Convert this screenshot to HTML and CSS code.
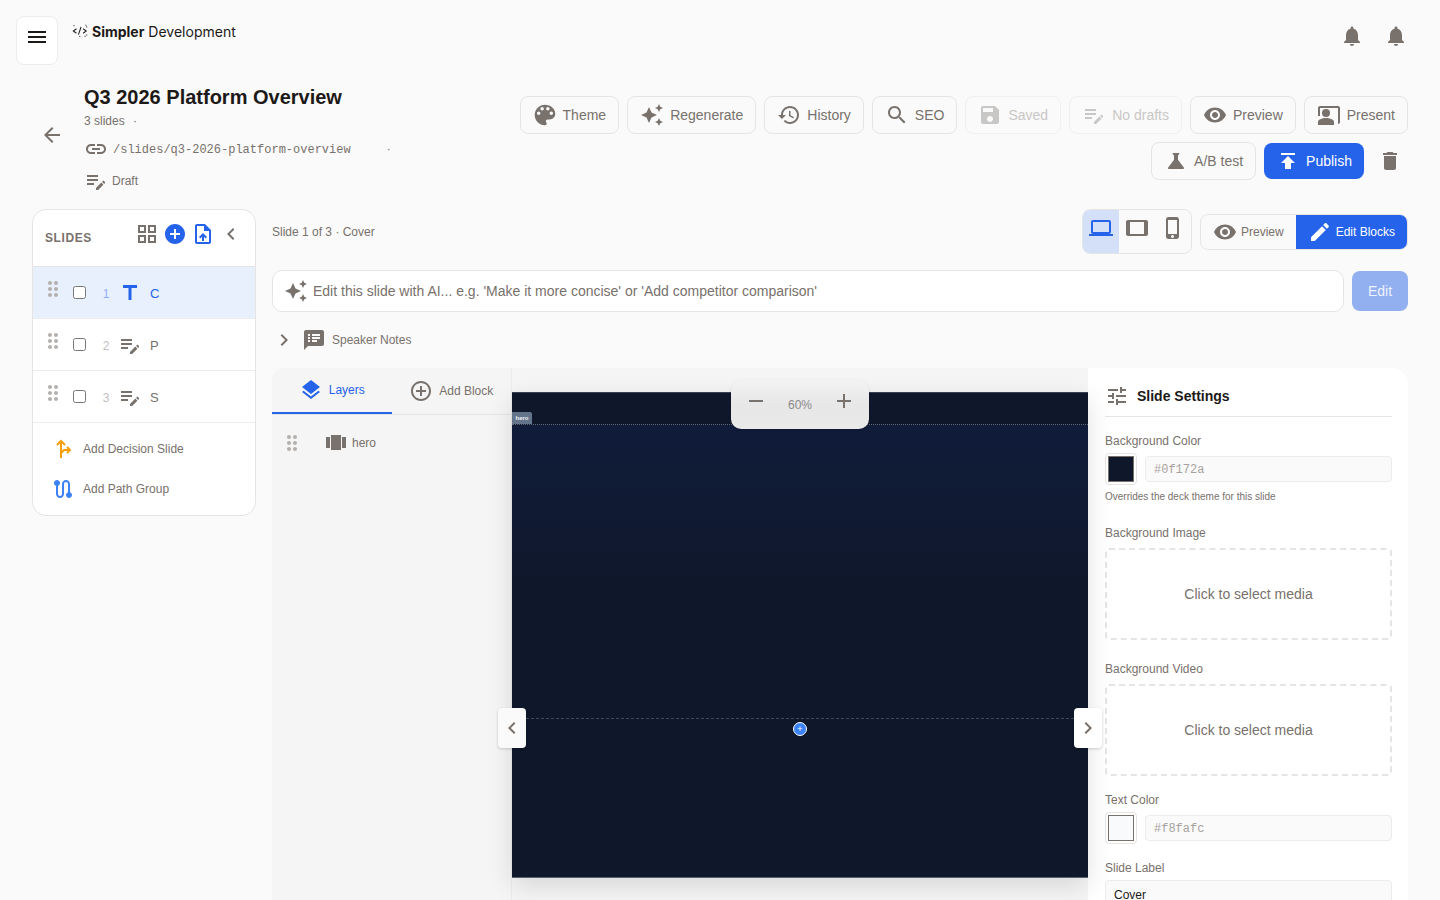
FILE: index.html
```html
<!DOCTYPE html>
<html lang="en">
<head>
<meta charset="utf-8">
<title>Q3 2026 Platform Overview</title>
<link rel="stylesheet" href="styles.css">
</head>
<body>
<svg class="sprite" aria-hidden="true">
  <symbol id="i-menu" viewBox="0 0 24 24"><path d="M3 18h18v-2H3v2zm0-5h18v-2H3v2zm0-7v2h18V6H3z"/></symbol>
  <symbol id="i-back" viewBox="0 0 24 24"><path d="M20 11H7.83l5.59-5.59L12 4l-8 8 8 8 1.41-1.41L7.83 13H20v-2z"/></symbol>
  <symbol id="i-bell" viewBox="0 0 24 24"><path d="M12 22c1.1 0 2-.9 2-2h-4c0 1.1.89 2 2 2zm6-6v-5c0-3.07-1.64-5.64-4.5-6.32V4c0-.83-.67-1.5-1.5-1.5s-1.5.67-1.5 1.5v.68C7.63 5.36 6 7.92 6 11v5l-2 2v1h16v-1l-2-2z"/></symbol>
  <symbol id="i-palette" viewBox="1.5 1.5 21 21"><path d="M12 3c-4.97 0-9 4.03-9 9s4.03 9 9 9c.83 0 1.5-.67 1.5-1.5 0-.39-.15-.74-.39-1.01-.23-.26-.38-.61-.38-.99 0-.83.67-1.5 1.5-1.5H16c2.76 0 5-2.24 5-5 0-4.42-4.03-8-9-8zm-5.5 9c-.83 0-1.5-.67-1.5-1.5S5.67 9 6.5 9 8 9.67 8 10.5 7.33 12 6.5 12zm3-4C8.67 8 8 7.33 8 6.5S8.67 5 9.5 5s1.5.67 1.5 1.5S10.33 8 9.5 8zm5 0c-.83 0-1.5-.67-1.5-1.5S13.67 5 14.5 5s1.5.67 1.5 1.5S15.33 8 14.5 8zm3 4c-.83 0-1.5-.67-1.5-1.5S16.67 9 17.5 9s1.5.67 1.5 1.5-.67 1.5-1.5 1.5z"/></symbol>
  <symbol id="i-spark" viewBox="0 0 24 24"><path d="M19 9l1.25-2.75L23 5l-2.75-1.25L19 1l-1.25 2.75L15 5l2.75 1.25L19 9zm-7.5.5L9 4 6.5 9.5 1 12l5.5 2.5L9 20l2.5-5.5L17 12l-5.5-2.5zM19 15l-1.25 2.75L15 19l2.75 1.25L19 23l1.25-2.75L23 19l-2.75-1.25L19 15z"/></symbol>
  <symbol id="i-history" viewBox="0 0 24 24"><path d="M13 3c-4.97 0-9 4.03-9 9H1l3.89 3.89.07.14L9 12H6c0-3.87 3.13-7 7-7s7 3.13 7 7-3.13 7-7 7c-1.93 0-3.68-.79-4.94-2.06l-1.42 1.42C8.27 19.99 10.51 21 13 21c4.97 0 9-4.03 9-9s-4.03-9-9-9zm-1 5v5l4.28 2.54.72-1.21-3.5-2.08V8H12z"/></symbol>
  <symbol id="i-search" viewBox="0 0 24 24"><path d="M15.5 14h-.79l-.28-.27C15.41 12.59 16 11.11 16 9.5 16 5.91 13.09 3 9.5 3S3 5.91 3 9.5 5.91 16 9.5 16c1.61 0 3.09-.59 4.23-1.57l.27.28v.79l5 4.99L20.49 19l-4.99-5zm-6 0C7.01 14 5 11.99 5 9.5S7.01 5 9.5 5 14 7.01 14 9.5 11.99 14 9.5 14z"/></symbol>
  <symbol id="i-save" viewBox="0 0 24 24"><path d="M17 3H5c-1.11 0-2 .9-2 2v14c0 1.1.89 2 2 2h14c1.1 0 2-.9 2-2V7l-4-4zm-5 16c-1.66 0-3-1.34-3-3s1.34-3 3-3 3 1.34 3 3-1.34 3-3 3zm3-10H5V5h10v4z"/></symbol>
  <symbol id="i-note" viewBox="0 0 24 24"><path d="M3 10h11v2H3v-2zm0-2h11V6H3v2zm0 8h7v-2H3v2zm15.01-3.13l.71-.71c.39-.39 1.02-.39 1.41 0l.71.71c.39.39.39 1.02 0 1.41l-.71.71-2.12-2.12zm-.71.71l-5.3 5.3V21h2.12l5.3-5.3-2.12-2.12z"/></symbol>
  <symbol id="i-eye" viewBox="0 0 24 24"><path d="M12 4.5C7 4.5 2.73 7.61 1 12c1.73 4.39 6 7.5 11 7.5s9.27-3.11 11-7.5c-1.73-4.39-6-7.5-11-7.5zM12 17c-2.76 0-5-2.24-5-5s2.24-5 5-5 5 2.24 5 5-2.24 5-5 5zm0-8c-1.66 0-3 1.34-3 3s1.34 3 3 3 3-1.34 3-3-1.34-3-3-3z"/></symbol>
  <symbol id="i-present" viewBox="0 0 24 24"><path d="M21 3H3C1.9 3 1 3.9 1 5v8h2V5h18v16c1.1 0 2-.9 2-2V5c0-1.1-.9-2-2-2z"/><circle cx="9" cy="10" r="4"/><path d="M15.39 16.56C13.71 15.7 11.53 15 9 15c-2.53 0-4.71.7-6.39 1.56C1.61 17.07 1 18.1 1 19.22V22h16v-2.78c0-1.12-.61-2.15-1.61-2.66z"/></symbol>
  <symbol id="i-flask" viewBox="0 0 24 24"><path d="M19.8 18.4 14 10.67V6.5l1.35-1.69c.26-.33.03-.81-.39-.81H9.04c-.42 0-.65.48-.39.81L10 6.5v4.17L4.2 18.4c-.49.66-.02 1.6.8 1.6h14c.82 0 1.29-.94.8-1.6z"/></symbol>
  <symbol id="i-publish" viewBox="0 0 24 24"><path d="M5 4v2h14V4H5zm0 10h4v6h6v-6h4l-7-7-7 7z"/></symbol>
  <symbol id="i-delete" viewBox="0 0 24 24"><path d="M6 19c0 1.1.9 2 2 2h8c1.1 0 2-.9 2-2V7H6v12zM19 4h-3.5l-1-1h-5l-1 1H5v2h14V4z"/></symbol>
  <symbol id="i-grid" viewBox="0 0 24 24"><path d="M3 3v8h8V3H3zm6 6H5V5h4v4zm-6 4v8h8v-8H3zm6 6H5v-4h4v4zm4-16v8h8V3h-8zm6 6h-4V5h4v4zm-6 4v8h8v-8h-8zm6 6h-4v-4h4v4z"/></symbol>
  <symbol id="i-addc" viewBox="0 0 24 24"><path d="M12 2C6.48 2 2 6.48 2 12s4.48 10 10 10 10-4.48 10-10S17.52 2 12 2zm5 11h-4v4h-2v-4H7v-2h4V7h2v4h4v2z"/></symbol>
  <symbol id="i-upload" viewBox="0 0 24 24"><path d="M14 2H6c-1.1 0-1.99.9-1.99 2L4 20c0 1.1.89 2 1.99 2H18c1.1 0 2-.9 2-2V8l-6-6zm4 18H6V4h7v5h5v11zM8 15.01l1.41 1.41L11 14.84V19h2v-4.16l1.59 1.59L16 15.01 12.01 11 8 15.01z"/></symbol>
  <symbol id="i-left" viewBox="0 0 24 24"><path d="M15.41 7.41L14 6l-6 6 6 6 1.41-1.41L10.83 12z"/></symbol>
  <symbol id="i-right" viewBox="0 0 24 24"><path d="M10 6L8.59 7.41 13.17 12l-4.58 4.59L10 18l6-6z"/></symbol>
  <symbol id="i-title" viewBox="0 0 24 24"><path d="M5 4v3h5.5v12h3V7H19V4z"/></symbol>
  <symbol id="i-drag" viewBox="0 0 24 24"><path d="M11 18c0 1.1-.9 2-2 2s-2-.9-2-2 .9-2 2-2 2 .9 2 2zm-2-8c-1.1 0-2 .9-2 2s.9 2 2 2 2-.9 2-2-.9-2-2-2zm0-6c-1.1 0-2 .9-2 2s.9 2 2 2 2-.9 2-2-.9-2-2-2zm6 4c1.1 0 2-.9 2-2s-.9-2-2-2-2 .9-2 2 .9 2 2 2zm0 2c-1.1 0-2 .9-2 2s.9 2 2 2 2-.9 2-2-.9-2-2-2zm0 6c-1.1 0-2 .9-2 2s.9 2 2 2 2-.9 2-2-.9-2-2-2z"/></symbol>
  <symbol id="i-fork" viewBox="0 0 24 24"><path d="M10 21V4M6 8l4-4 4 4M10 16l3-3h6M16 10l3 3-3 3" fill="none" stroke="currentColor" stroke-width="2"/></symbol>
  <symbol id="i-route" viewBox="0 0 24 24"><path d="M19 15.18V7c0-2.21-1.79-4-4-4s-4 1.79-4 4v10c0 1.1-.9 2-2 2s-2-.9-2-2V8.82C8.16 8.4 9 7.3 9 6c0-1.66-1.34-3-3-3S3 4.34 3 6c0 1.3.84 2.4 2 2.82V17c0 2.21 1.79 4 4 4s4-1.79 4-4V7c0-1.1.9-2 2-2s2 .9 2 2v8.18c-1.16.41-2 1.51-2 2.82 0 1.66 1.34 3 3 3s3-1.34 3-3c0-1.3-.84-2.4-2-2.82z"/></symbol>
  <symbol id="i-laptop" viewBox="0 0 24 24"><path d="M20 18c1.1 0 1.99-.9 1.99-2L22 6c0-1.1-.9-2-2-2H4c-1.1 0-2 .9-2 2v10c0 1.1.9 2 2 2H0v2h24v-2h-4zM4 6h16v10H4V6z"/></symbol>
  <symbol id="i-tablet" viewBox="0 0 24 24"><path d="M21 4H3c-1.1 0-2 .9-2 2v12c0 1.1.9 2 2 2h18c1.1 0 1.99-.9 1.99-2L23 6c0-1.1-.9-2-2-2zm-2 14H5V6h14v12z"/></symbol>
  <symbol id="i-phone" viewBox="0 0 24 24"><path d="M15.5 1h-8C6.12 1 5 2.12 5 3.5v17C5 21.88 6.12 23 7.5 23h8c1.38 0 2.5-1.12 2.5-2.5v-17C18 2.12 16.88 1 15.5 1zm-4 21c-.83 0-1.5-.67-1.5-1.5s.67-1.5 1.5-1.5 1.5.67 1.5 1.5-.67 1.5-1.5 1.5zm4.5-4H7V4h9v14z"/></symbol>
  <symbol id="i-edit" viewBox="0 0 24 24"><path d="M3 17.25V21h3.75L17.81 9.94l-3.75-3.75L3 17.25zM20.71 7.04c.39-.39.39-1.02 0-1.41l-2.34-2.34c-.39-.39-1.02-.39-1.41 0l-1.83 1.83 3.75 3.75 1.83-1.83z"/></symbol>
  <symbol id="i-speaker" viewBox="0 0 24 24"><path d="M20 2H4c-1.1 0-1.99.9-1.99 2L2 22l4-4h14c1.1 0 2-.9 2-2V4c0-1.1-.9-2-2-2zM8 14H6v-2h2v2zm0-3H6V9h2v2zm0-3H6V6h2v2zm7 6h-5v-2h5v2zm3-3h-8V9h8v2zm0-3h-8V6h8v2z"/></symbol>
  <symbol id="i-layers" viewBox="0 0 24 24"><path d="M11.99 18.54l-7.37-5.73L3 14.07l9 7 9-7-1.63-1.27-7.38 5.74zM12 16l7.36-5.73L21 9l-9-7-9 7 1.63 1.27L12 16z"/></symbol>
  <symbol id="i-addo" viewBox="0 0 24 24"><path d="M13 7h-2v4H7v2h4v4h2v-4h4v-2h-4V7zm-1-5C6.48 2 2 6.48 2 12s4.48 10 10 10 10-4.48 10-10S17.52 2 12 2zm0 18c-4.41 0-8-3.59-8-8s3.59-8 8-8 8 3.59 8 8-3.59 8-8 8z"/></symbol>
  <symbol id="i-carousel" viewBox="0 0 24 24"><path d="M7 19h10V4H7v15zm-5-2h4V6H2v11zm16-11v11h4V6h-4z"/></symbol>
  <symbol id="i-tune" viewBox="0 0 24 24"><path d="M3 17v2h6v-2H3zM3 5v2h10V5H3zm10 16v-2h8v-2h-8v-2h-2v6h2zM7 9v2H3v2h4v2h2V9H7zm14 4v-2H11v2h10zm-6-4h2V7h4V5h-4V3h-2v6z"/></symbol>
  <symbol id="i-link" viewBox="0 0 24 24"><path d="M3.9 12c0-1.71 1.39-3.1 3.1-3.1h4V7H7c-2.76 0-5 2.24-5 5s2.24 5 5 5h4v-1.9H7c-1.71 0-3.1-1.39-3.1-3.1zM8 13h8v-2H8v2zm9-6h-4v1.9h4c1.71 0 3.1 1.39 3.1 3.1s-1.39 3.1-3.1 3.1h-4V17h4c2.76 0 5-2.24 5-5s-2.24-5-5-5z"/></symbol>
  <symbol id="i-minus" viewBox="0 0 24 24"><path d="M19 13H5v-2h14v2z"/></symbol>
  <symbol id="i-plus" viewBox="0 0 24 24"><path d="M19 13h-6v6h-2v-6H5v-2h6V5h2v6h6v2z"/></symbol>
</svg>

<header class="topbar">
  <button class="menu-btn"><svg class="ic ic-dark"><use href="#i-menu"/></svg></button>
  <div class="brand">
    <svg class="logo" viewBox="0 0 18 14"><path d="M5 4.5 1.5 7 5 9.5M7.2 11l3-8.5M12.5 4.5 16 7l-3.5 2.5" fill="none" stroke="#222" stroke-width="1.2"/><path d="M1.5 1h1.4M15 .5h1.4M15.8 2.5h1.4M15.8 11.5h1.4M14 13h1.4M8 13h1.4" stroke="#444" stroke-width="1.1"/></svg>
    <span><b>Simpler</b> Development</span>
  </div>
  <div class="bells">
    <svg class="ic"><use href="#i-bell"/></svg>
    <svg class="ic"><use href="#i-bell"/></svg>
  </div>
</header>

<section class="deck-head">
  <svg class="ic back"><use href="#i-back"/></svg>
  <div class="deck-info">
    <h1 class="deck-title">Q3 2026 Platform Overview</h1>
    <div class="deck-count">3 slides <span class="dot">·</span></div>
    <div class="deck-row"><svg class="ic"><use href="#i-link"/></svg><span class="mono">/slides/q3-2026-platform-overview</span><span class="dot dot-far">·</span></div>
    <div class="deck-row draft"><svg class="ic"><use href="#i-note"/></svg><span>Draft</span></div>
  </div>
  <div class="actions">
    <button class="btn"><svg class="ic"><use href="#i-palette"/></svg>Theme</button>
    <button class="btn"><svg class="ic"><use href="#i-spark"/></svg>Regenerate</button>
    <button class="btn"><svg class="ic"><use href="#i-history"/></svg>History</button>
    <button class="btn"><svg class="ic"><use href="#i-search"/></svg>SEO</button>
    <button class="btn is-off"><svg class="ic"><use href="#i-save"/></svg>Saved</button>
    <button class="btn is-off"><svg class="ic"><use href="#i-note"/></svg>No drafts</button>
    <button class="btn"><svg class="ic"><use href="#i-eye"/></svg>Preview</button>
    <button class="btn"><svg class="ic"><use href="#i-present"/></svg>Present</button>
    <button class="btn"><svg class="ic"><use href="#i-flask"/></svg>A/B test</button>
    <button class="btn btn-primary"><svg class="ic"><use href="#i-publish"/></svg>Publish</button>
    <button class="icon-btn"><svg class="ic"><use href="#i-delete"/></svg></button>
  </div>
</section>

<main class="workspace">
  <aside class="slides-panel">
    <div class="slides-head">
      <span class="slides-title">SLIDES</span>
      <div class="slides-tools">
        <svg class="ic"><use href="#i-grid"/></svg>
        <svg class="ic ic-blue"><use href="#i-addc"/></svg>
        <svg class="ic ic-blue"><use href="#i-upload"/></svg>
        <svg class="ic"><use href="#i-left"/></svg>
      </div>
    </div>
    <div class="slide-row is-active">
      <svg class="ic drag"><use href="#i-drag"/></svg>
      <input type="checkbox" class="check">
      <span class="num">1</span>
      <svg class="ic ic-blue"><use href="#i-title"/></svg>
      <span class="slide-name">C</span>
    </div>
    <div class="slide-row">
      <svg class="ic drag"><use href="#i-drag"/></svg>
      <input type="checkbox" class="check">
      <span class="num">2</span>
      <svg class="ic"><use href="#i-note"/></svg>
      <span class="slide-name">P</span>
    </div>
    <div class="slide-row">
      <svg class="ic drag"><use href="#i-drag"/></svg>
      <input type="checkbox" class="check">
      <span class="num">3</span>
      <svg class="ic"><use href="#i-note"/></svg>
      <span class="slide-name">S</span>
    </div>
    <div class="slides-foot">
      <div class="foot-row"><svg class="ic ic-orange"><use href="#i-fork"/></svg>Add Decision Slide</div>
      <div class="foot-row"><svg class="ic ic-sky"><use href="#i-route"/></svg>Add Path Group</div>
    </div>
  </aside>

  <div class="main-col">
    <div class="toolbar">
      <span class="crumb">Slide 1 of 3 · Cover</span>
      <div class="devices">
        <span class="device is-on"><svg class="ic ic-blue"><use href="#i-laptop"/></svg></span>
        <span class="device"><svg class="ic"><use href="#i-tablet"/></svg></span>
        <span class="device"><svg class="ic"><use href="#i-phone"/></svg></span>
      </div>
      <div class="mode">
        <span class="mode-item"><svg class="ic"><use href="#i-eye"/></svg>Preview</span>
        <span class="mode-item is-on"><svg class="ic"><use href="#i-edit"/></svg>Edit Blocks</span>
      </div>
    </div>

    <div class="ai-row">
      <label class="ai-box">
        <svg class="ic"><use href="#i-spark"/></svg>
        <input class="ai-input" placeholder="Edit this slide with AI... e.g. 'Make it more concise' or 'Add competitor comparison'">
      </label>
      <button class="ai-btn">Edit</button>
    </div>

    <div class="notes-row">
      <svg class="ic"><use href="#i-right"/></svg>
      <svg class="ic notes-ic"><use href="#i-speaker"/></svg>
      <span>Speaker Notes</span>
    </div>

    <div class="editor">
      <div class="layers">
        <div class="tabs">
          <div class="tab is-on"><svg class="ic ic-blue"><use href="#i-layers"/></svg>Layers</div>
          <div class="tab"><svg class="ic"><use href="#i-addo"/></svg>Add Block</div>
        </div>
        <div class="layer-row">
          <svg class="ic drag"><use href="#i-drag"/></svg>
          <svg class="ic layer-ic"><use href="#i-carousel"/></svg>
          <span>hero</span>
        </div>
      </div>

      <div class="canvas">
        <div class="slide">
          <span class="block-tag">hero</span>
          <div class="block-hero"></div>
          <div class="insert-line"></div>
          <span class="insert-dot">+</span>
        </div>
      </div>

      <aside class="settings">
        <div class="settings-head"><svg class="ic"><use href="#i-tune"/></svg><span>Slide Settings</span></div>

        <label class="lbl lbl-first">Background Color</label>
        <div class="color-row">
          <span class="swatch"><span class="swatch-fill fill-dark"></span></span>
          <span class="hex">#0f172a</span>
        </div>
        <p class="help">Overrides the deck theme for this slide</p>

        <label class="lbl lbl-wide lbl-after-help">Background Image</label>
        <div class="drop">Click to select media</div>

        <label class="lbl lbl-wide">Background Video</label>
        <div class="drop">Click to select media</div>

        <label class="lbl">Text Color</label>
        <div class="color-row">
          <span class="swatch"><span class="swatch-fill fill-light"></span></span>
          <span class="hex">#f8fafc</span>
        </div>

        <label class="lbl">Slide Label</label>
        <div class="text-field">Cover</div>
      </aside>

      <div class="zoom-pill">
        <svg class="ic"><use href="#i-minus"/></svg>
        <span>60%</span>
        <svg class="ic"><use href="#i-plus"/></svg>
      </div>
      <button class="nav nav-left"><svg class="ic"><use href="#i-left"/></svg></button>
      <button class="nav nav-right"><svg class="ic"><use href="#i-right"/></svg></button>
    </div>
  </div>
</main>
</body>
</html>
```

FILE: styles.css
```css
* { box-sizing: border-box; }
html, body { height: 100%; }
body {
  margin: 0;
  height: 900px;
  overflow: hidden;
  background: #fafafa;
  color: #78716c;
  font-family: "Liberation Sans", Arial, sans-serif;
  font-size: 12px;
}
.sprite { display: none; }
button { font-family: inherit; margin: 0; }
.ic { width: 24px; height: 24px; flex: none; fill: #78716c; color: #78716c; display: block; }
.ic-dark { fill: #1c1917; }
.ic-blue { fill: #2563eb; }
.ic-orange { color: #f59e0b; fill: none; }
.ic-sky { fill: #3b82f6; }

/* top bar */
.topbar { height: 86px; display: flex; align-items: flex-start; padding: 16px 32px 0 16px; }
.menu-btn {
  width: 42px; height: 49px; padding: 8px 0 0 8px;
  display: flex; align-items: flex-start; background: #fff;
  border: 1px solid #ececec; border-radius: 8px;
}
.brand {
  margin: 8px 0 0 14px; display: flex; align-items: center; gap: 4px;
  font-family: Inter, sans-serif; font-size: 14px; line-height: 16px; color: #1c1917;
}
.brand b { font-weight: 700; }
.logo { width: 16px; height: 14px; margin-top: -3px; }
.bells { margin: 8px 0 0 auto; display: flex; gap: 20px; }

/* deck header */
.deck-head { height: 123px; display: flex; align-items: flex-start; padding: 0 32px 0 40px; }
.back { margin: 37px 20px 0 0; }
.deck-info { flex: none; width: 336px; }
.deck-title { margin: 0; font-size: 20px; line-height: 22px; font-weight: 700; color: #1c1917; }
.deck-count { margin-top: 5px; line-height: 16px; }
.dot { margin-left: 5px; }
.dot-far { margin-left: 31px; }
.deck-row { margin-top: 8px; height: 24px; display: flex; align-items: center; gap: 5px; }
.deck-row .mono { padding-top: 1px; }
.draft { gap: 4px; }
.mono { font-family: "Liberation Mono", monospace; font-size: 12px; }
.actions {
  margin: 10px 0 0 auto; width: 890px;
  display: flex; flex-wrap: wrap; justify-content: flex-end; align-items: center; gap: 8px;
}
.btn {
  height: 38px; padding: 0 12px;
  display: inline-flex; align-items: center; gap: 6px;
  background: #fafafa; color: #78716c;
  border: 1px solid #e7e5e4; border-radius: 8px;
  font-size: 14px;
}
.is-off { color: #c9c7c6; border-color: #f1f0f0; }
.is-off .ic { fill: #c9c7c6; }
.btn-primary { height: 36px; background: #2563eb; border: 0; color: #fff; }
.btn-primary .ic { fill: #fff; }
.icon-btn { height: 36px; width: 36px; padding: 6px; background: none; border: 0; }

/* workspace */
.workspace { display: flex; align-items: flex-start; gap: 16px; padding: 0 32px; }

.slides-panel {
  width: 224px; flex: none; height: 307px; overflow: hidden;
  background: #fff; border: 1px solid #e7e5e4; border-radius: 14px;
}
.slides-head { height: 57px; display: flex; align-items: center; padding: 0 12px; border-bottom: 1px solid #e7e5e4; box-shadow: 0 1px 2px rgba(0,0,0,.04); }
.slides-title { font-size: 12px; font-weight: 700; letter-spacing: .6px; color: #78716c; }
.slides-tools { margin: -8px 0 0 auto; display: flex; gap: 4px; }
.slide-row { height: 52px; display: flex; align-items: center; padding-left: 8px; border-bottom: 1px solid #ececec; }
.slide-row.is-active { background: #e8f0fe; color: #2563eb; }
.drag { fill: #b3b0ae; margin-top: -8px; }
.check { width: 13px; height: 13px; margin: 0 0 0 8px; flex: none; }
.num { width: 12px; margin: 0 6px 0 14px; text-align: center; color: #c2c0bf; font-size: 12px; padding-top: 2px; }
.is-active .num { color: #8eaeef; }
.slide-name { margin-left: 8px; font-size: 13px; padding-top: 2px; }
.slides-foot { padding-top: 6px; }
.foot-row { height: 40px; display: flex; align-items: center; gap: 8px; padding-left: 18px; color: #78716c; }

.main-col { flex: 1; min-width: 0; }
.toolbar { height: 45px; display: flex; align-items: flex-start; }
.crumb { margin: 15px auto 0 0; line-height: 16px; }
.devices { height: 45px; display: flex; border: 1px solid #e7e5e4; border-radius: 8px; overflow: hidden; }
.device { width: 36px; padding: 6px 6px 0; }
.device.is-on { background: #d3e0f8; }
.mode {
  margin: 5px 0 0 8px; height: 36px; display: flex;
  border: 1px solid #e7e5e4; border-radius: 8px; overflow: hidden;
}
.mode-item { display: flex; align-items: center; gap: 4px; padding: 0 12px; }
.mode-item.is-on { background: #2563eb; color: #fff; margin: -1px -1px -1px 0; padding-right: 13px; }
.mode-item.is-on .ic { fill: #fff; }

.ai-row { margin-top: 16px; display: flex; align-items: center; gap: 8px; }
.ai-box {
  flex: 1; height: 42px; display: flex; align-items: center; gap: 5px; padding-left: 11px;
  background: #fff; border: 1px solid #e7e5e4; border-radius: 10px;
}
.ai-input { flex: 1; border: 0; outline: 0; padding: 0; background: none; font: 14px "Liberation Sans", Arial, sans-serif; color: #78716c; }
.ai-input::placeholder { color: #78716c; opacity: 1; }
.ai-btn { width: 56px; height: 40px; background: #92aff0; color: #eef3fd; border: 0; border-radius: 8px; font-size: 14px; }

.notes-row { margin-top: 16px; height: 24px; display: flex; align-items: center; }
.notes-ic { margin-left: 6px; margin-right: 6px; }

/* editor */
.editor { position: relative; margin-top: 16px; height: 532px; display: flex; }
.layers { width: 240px; flex: none; background: #f5f5f5; border-right: 1px solid #ececec; border-top-left-radius: 12px; }
.tabs { height: 47px; display: flex; border-bottom: 1px solid #e5e5e5; }
.tab { width: 120px; height: 46px; display: flex; align-items: center; justify-content: center; gap: 6px; }
.tab.is-on { color: #2563eb; border-bottom: 2px solid #2563eb; }
.layer-row { height: 24px; margin-top: 16px; padding-left: 8px; display: flex; align-items: center; }
.layer-row .drag { margin-top: 0; }
.layer-ic { margin: 0 4px 0 20px; }

.canvas { flex: 1; min-width: 0; background: #f5f5f5; padding-top: 24px; }
.slide {
  position: relative; height: 486px; background: #0f172a;
  border-top: 1px solid #3a4356; border-bottom: 1px solid #59616f;
  box-shadow: 0 8px 24px rgba(0,0,0,.12);
}
.block-tag {
  position: absolute; left: 0; top: 19px; width: 20px; height: 12px;
  background: #64748b; color: #f1f5f9; font-size: 6px; font-weight: 700; line-height: 12px; text-align: center;
  border-top-right-radius: 2px;
}
.block-hero {
  position: absolute; left: 0; right: 0; top: 31px; height: 170px;
  border-top: 1px dotted rgba(255,255,255,.35);
  background: linear-gradient(#101c3a, #0f172a);
}
.insert-line { position: absolute; left: 14px; right: 14px; top: 325px; border-top: 1px dashed rgba(255,255,255,.22); }
.insert-dot {
  position: absolute; left: 281px; top: 329px; width: 14px; height: 14px;
  background: #3b82f6; border: 1px solid #fff; border-radius: 50%;
  color: #fff; font-size: 9px; line-height: 13px; text-align: center;
}

.settings { width: 320px; flex: none; background: #fff; border-top-right-radius: 16px; padding: 16px 16px 0 17px; }
.settings-head {
  height: 33px; display: flex; gap: 8px; border-bottom: 1px solid #e7e5e4;
  font-size: 14px; line-height: 24px; font-weight: 700; color: #1c1917;
}
.lbl { display: block; margin-top: 16px; line-height: 16px; color: #78716c; }
.lbl-wide { margin-top: 21px; }
.lbl-after-help { margin-top: 22px; }
.color-row { margin-top: 4px; display: flex; align-items: center; gap: 8px; }
.swatch { width: 32px; height: 32px; padding: 2px; border: 1px solid #e7e5e4; border-radius: 4px; background: #fff; flex: none; }
.swatch-fill { display: block; height: 100%; border: 1px solid #78716c; }
.fill-dark { background: #0f172a; }
.fill-light { background: #f8fafc; }
.hex {
  flex: 1; height: 26px; padding-left: 8px; line-height: 26px;
  font-family: "Liberation Mono", monospace; font-size: 12px; color: #a8a29e;
  background: #fafafa; border: 1px solid #ececec; border-radius: 4px;
}
.help { margin: 6px 0 0; font-size: 10px; line-height: 12px; color: #78716c; }
.drop {
  margin-top: 7px; height: 92px; display: flex; align-items: center; justify-content: center;
  border: 2px dashed #e7e5e4; border-radius: 4px;
  font-size: 14px; color: #78716c;
}
.text-field {
  margin-top: 4px; height: 34px; padding: 7px 8px 0; line-height: 14px;
  background: #fafafa; border: 1px solid #ececec; border-radius: 4px; color: #1c1917;
}

.zoom-pill {
  position: absolute; left: 459px; top: 12px; width: 138px; height: 49px;
  display: flex; align-items: center; justify-content: space-between; padding: 0 13px 7px;
  background: linear-gradient(#f3f3f3, #e7e7e7 50%, #e9e9e9);
  border-radius: 10px; box-shadow: 0 1px 3px rgba(0,0,0,.12);
  color: #8a8a8a; font-size: 12px;
}
.zoom-pill span { padding-top: 7px; }
.nav {
  position: absolute; top: 340px; width: 28px; height: 40px; padding: 8px 2px;
  background: #fff; border: 0; border-radius: 4px; box-shadow: 0 1px 3px rgba(0,0,0,.18);
}
.nav-left { left: 226px; background: #fafafa; }
.nav-right { left: 802px; }
```
